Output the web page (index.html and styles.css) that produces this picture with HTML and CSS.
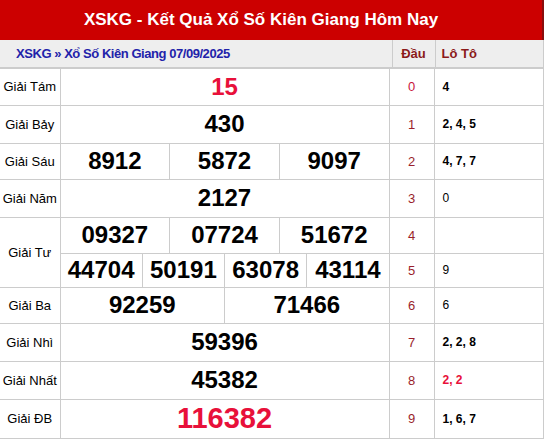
FILE: index.html
```html
<!DOCTYPE html>
<html lang="vi">
<head>
<meta charset="utf-8">
<link rel="stylesheet" href="styles.css">
</head>
<body>
<div class="box">
  <div class="title">XSKG - Kết Quả Xổ Số Kiên Giang Hôm Nay</div>
  <table class="sub">
    <tr>
      <td class="sub-name">XSKG » Xổ Số Kiên Giang 07/09/2025</td>
      <td class="sub-dau">Đầu</td>
      <td class="sub-loto">Lô Tô</td>
    </tr>
  </table>
  <table class="kq">
    <tr class="h37">
      <td class="lbl">Giải Tám</td>
      <td class="prz"><div class="cells"><span class="red">15</span></div></td>
      <td class="dau dau0">0</td>
      <td class="lt">4</td>
    </tr>
    <tr class="h38">
      <td class="lbl">Giải Bảy</td>
      <td class="prz"><div class="cells"><span>430</span></div></td>
      <td class="dau">1</td>
      <td class="lt">2, 4, 5</td>
    </tr>
    <tr class="h36">
      <td class="lbl">Giải Sáu</td>
      <td class="prz"><div class="cells"><span>8912</span><span>5872</span><span>9097</span></div></td>
      <td class="dau">2</td>
      <td class="lt">4, 7, 7</td>
    </tr>
    <tr class="h38">
      <td class="lbl">Giải Năm</td>
      <td class="prz"><div class="cells"><span>2127</span></div></td>
      <td class="dau">3</td>
      <td class="lt thin">0</td>
    </tr>
    <tr class="h36">
      <td class="lbl" rowspan="2">Giải Tư</td>
      <td class="prz"><div class="cells"><span>09327</span><span>07724</span><span>51672</span></div></td>
      <td class="dau">4</td>
      <td class="lt"></td>
    </tr>
    <tr class="h34">
      <td class="prz"><div class="cells"><span>44704</span><span>50191</span><span>63078</span><span>43114</span></div></td>
      <td class="dau">5</td>
      <td class="lt thin">9</td>
    </tr>
    <tr class="h36">
      <td class="lbl">Giải Ba</td>
      <td class="prz"><div class="cells"><span>92259</span><span>71466</span></div></td>
      <td class="dau">6</td>
      <td class="lt thin">6</td>
    </tr>
    <tr class="h38">
      <td class="lbl">Giải Nhì</td>
      <td class="prz"><div class="cells"><span>59396</span></div></td>
      <td class="dau">7</td>
      <td class="lt">2, 2, 8</td>
    </tr>
    <tr class="h38">
      <td class="lbl">Giải Nhất</td>
      <td class="prz"><div class="cells"><span>45382</span></div></td>
      <td class="dau">8</td>
      <td class="lt red-lt">2, 2</td>
    </tr>
    <tr class="h39">
      <td class="lbl">Giải ĐB</td>
      <td class="prz"><div class="cells"><span class="red big">116382</span></div></td>
      <td class="dau">9</td>
      <td class="lt">1, 6, 7</td>
    </tr>
  </table>
</div>
</body>
</html>
```

FILE: styles.css
```css
* { box-sizing: border-box; }
html, body {
  margin: 0;
  padding: 0;
  background: #ffffff;
  font-family: "Liberation Sans", Arial, sans-serif;
  color: #000;
}
.box {
  width: 544px;
}
.title {
  height: 40px;
  background: #cc0000;
  border-right: 2px solid #8a0d0d;
  color: #ffffff;
  font-weight: bold;
  font-size: 17px;
  display: flex;
  align-items: center;
  justify-content: center;
  padding-right: 20px;
}
table {
  border-collapse: collapse;
  width: 544px;
  table-layout: fixed;
}
.sub td {
  height: 27px;
  background: #eeeeee;
  border: 1px solid #cccccc;
  border-top: none;
  font-weight: bold;
  font-size: 13px;
  padding: 0;
}
.sub-name {
  width: 392px;
  color: #2222aa;
  padding-left: 16px !important;
  letter-spacing: -0.45px;
  border-left: none !important;
}
.sub-dau {
  width: 43px;
  color: #8b1a1a;
  text-align: center;
}
.sub-loto {
  color: #8b1a1a;
  padding-left: 6px !important;
}
.kq td {
  border: 1px solid #cccccc;
  padding: 0;
}
.kq tr td:first-child.lbl { border-left: none; }
.lbl {
  width: 60px;
  font-size: 13px;
  text-align: center;
}
.prz {
  width: 329px;
}
.dau {
  width: 45px;
  text-align: center;
  font-size: 13px;
  color: #9a1f2c;
}
.dau0 { color: #c8143c; }
.lt {
  padding-left: 8px !important;
  font-size: 12px;
  font-weight: bold;
}
.lt.thin { font-weight: normal; }
.lt.red-lt { color: #e8103a; }
.h37 td { height: 37px; }
.h38 td { height: 38px; }
.h36 td { height: 36px; }
.h34 td { height: 34px; }
.h39 td { height: 39px; }
.cells {
  display: flex;
  height: 100%;
}
.cells span {
  flex: 1;
  display: flex;
  align-items: center;
  justify-content: center;
  font-weight: bold;
  font-size: 24px;
  border-left: 1px solid #cccccc;
}
.cells span:first-child { border-left: none; }
.cells .red { color: #e8103a; }
.cells .big { font-size: 29px; }
```
